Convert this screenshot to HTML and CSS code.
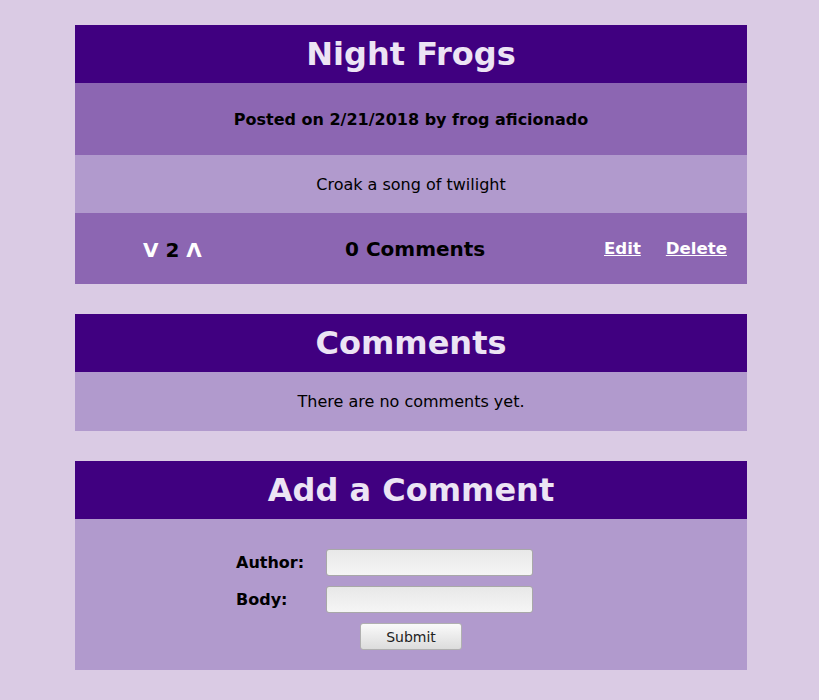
FILE: index.html
```html
<!DOCTYPE html>
<html>
<head>
<meta charset="utf-8">
<link rel="stylesheet" href="styles.css">
</head>
<body>
<main class="page">
  <section class="card">
    <h1 class="card-title">Night Frogs</h1>
    <div class="meta">Posted on 2/21/2018 by frog aficionado</div>
    <div class="content">Croak a song of twilight</div>
    <div class="actions">
      <div class="votes"><span class="arrow">V</span> 2 <span class="arrow">Λ</span></div>
      <div class="count">0 Comments</div>
      <div class="links"><a href="#">Edit</a><a href="#">Delete</a></div>
    </div>
  </section>
  <section class="card">
    <h1 class="card-title">Comments</h1>
    <div class="content">There are no comments yet.</div>
  </section>
  <section class="card">
    <h1 class="card-title">Add a Comment</h1>
    <form class="form">
      <div class="row"><label>Author:</label><input type="text"></div>
      <div class="row"><label>Body:</label><input type="text"></div>
      <button type="button" class="submit">Submit</button>
    </form>
  </section>
</main>
</body>
</html>
```
FILE: styles.css
```css
html, body { margin: 0; padding: 0; }
body {
  background: #dacbe4;
  font-family: "DejaVu Sans", sans-serif;
  color: #000;
}
.page {
  width: 672px;
  margin: 0 72px 0 75px;
  padding-top: 25px;
  display: flex;
  flex-direction: column;
  gap: 30px;
}
.card { display: flex; flex-direction: column; }
.card-title {
  margin: 0;
  height: 58px;
  line-height: 58px;
  background: #400080;
  color: #ece4f4;
  text-align: center;
  font-size: 32px;
  font-weight: bold;
}
.meta {
  height: 72px;
  background: #8c66b2;
  display: flex;
  align-items: center;
  justify-content: center;
  font-weight: bold;
  font-size: 16px;
}
.content {
  height: 58px;
  background: #b19acd;
  display: flex;
  align-items: center;
  justify-content: center;
  font-size: 16px;
}
.card:nth-child(2) .content { height: 59px; }
.actions {
  height: 71px;
  background: #8c66b2;
  display: flex;
  align-items: center;
  padding: 0 20px 0 68px;
  font-weight: bold;
}
.votes {
  width: 61px;
  font-size: 20px;
  white-space: nowrap;
  margin-top: 2px;
}
.arrow { color: #fff; }
.count { font-size: 20px; margin-left: 141px; }
.links { margin-left: auto; display: flex; gap: 25px; font-size: 16.6px; }
.links a { color: #fff; }
.form {
  background: #b19acd;
  height: 151px;
  box-sizing: border-box;
  padding-top: 30px;
  display: flex;
  flex-direction: column;
  align-items: center;
}
.row {
  align-self: flex-start;
  margin-left: 161px;
  display: flex;
  align-items: center;
  margin-bottom: 10px;
}
.row label {
  width: 90px;
  font-weight: bold;
  font-size: 16px;
}
.row input {
  width: 207px;
  height: 27px;
  box-sizing: border-box;
  border: 1px solid #a8a8a8;
  border-radius: 3px;
  background: linear-gradient(#e8e8e8, #f5f5f5);
}
.submit {
  width: 102px;
  height: 27px;
  border: 1px solid #b0b0b0;
  border-radius: 3px;
  background: linear-gradient(#fafafa, #dcdcdc);
  font-family: "DejaVu Sans", sans-serif;
  font-size: 14px;
  color: #222;
}
```
